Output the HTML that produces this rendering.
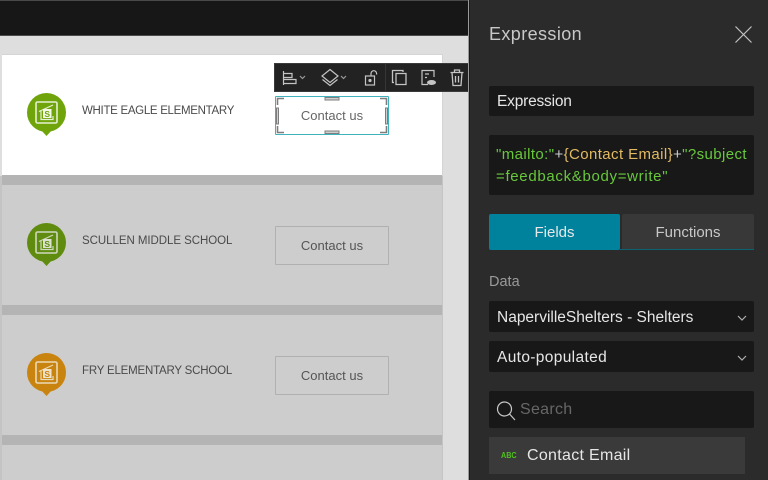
<!DOCTYPE html>
<html><head><meta charset="utf-8">
<style>
html,body{margin:0;padding:0;width:768px;height:480px;overflow:hidden;background:#dedede;font-family:"Liberation Sans",sans-serif}
.a{position:absolute;box-sizing:border-box}
.t{position:absolute;white-space:nowrap;letter-spacing:0}
.box{position:absolute;left:489px;width:265px;background:#181818;border-radius:2px}
.lbl{position:absolute;left:82px;font-size:11.5px;color:#4a4a4a;white-space:nowrap;line-height:14px;letter-spacing:-.3px}
.btn{position:absolute;left:275px;width:114px;height:39px;border:1px solid #b0b0b0;text-align:center;line-height:37px;font-size:13px;color:#555;box-sizing:border-box;border-radius:1px}
svg{position:absolute;overflow:visible}
.pf{color:#e6e6e6;font-size:15.5px;position:absolute;left:497px;white-space:nowrap}
</style></head><body>
<div class="a" style="left:0;top:0;width:768px;height:36px;background:#171717;border-top:1px solid #4a4a4a;"></div>
<div class="a" style="left:0;top:35px;width:469px;height:1px;background:#4a4a4a"></div>

<div class="a" style="left:2px;top:54px;width:441px;height:122px;background:#d4d4d4"></div>
<div class="a" style="left:0;top:176px;width:443px;height:304px;background:#c4c4c4"></div>
<div class="a" style="left:2px;top:55px;width:440px;height:120px;background:#fff"></div>
<div class="a" style="left:2px;top:175px;width:440px;height:10px;background:#b4b4b4"></div>
<div class="a" style="left:2px;top:185px;width:440px;height:120px;background:#cdcdcd"></div>
<div class="a" style="left:2px;top:305px;width:440px;height:10px;background:#b4b4b4"></div>
<div class="a" style="left:2px;top:315px;width:440px;height:120px;background:#cdcdcd"></div>
<div class="a" style="left:2px;top:435px;width:440px;height:10px;background:#b4b4b4"></div>
<div class="a" style="left:2px;top:445px;width:440px;height:35px;background:#cdcdcd"></div>

<svg style="left:27px;top:93px" width="40" height="44" viewBox="0 0 40 44">
<circle cx="19.5" cy="19.5" r="19.5" fill="#6fa50b"/><path d="M14 37L19.5 43L25 37Z" fill="#6fa50b"/>
<rect x="9" y="9" width="21" height="21" rx="1.5" fill="none" stroke="#e6f0d2" stroke-width="1.6"/>
<path d="M12 18.5L26 12M14 17V26.5H16M14 26.500H26V23" fill="none" stroke="#e6f0d2" stroke-width="1.2"/>
<rect x="16" y="16" width="8.500" height="9" fill="#f4f8ea"/><text x="20.200" y="24" font-size="8.500" font-weight="bold" text-anchor="middle" fill="#6fa50b" font-family="Liberation Sans">S</text>
</svg>
<svg style="left:27px;top:223px" width="40" height="44" viewBox="0 0 40 44">
<circle cx="19.5" cy="19.5" r="19.5" fill="#5f8c0f"/><path d="M14 37L19.5 43L25 37Z" fill="#5f8c0f"/>
<rect x="9" y="9" width="21" height="21" rx="1.5" fill="none" stroke="#cfd8bd" stroke-width="1.6"/>
<path d="M12 18.5L26 12M14 17V26.5H16M14 26.500H26V23" fill="none" stroke="#cfd8bd" stroke-width="1.2"/>
<rect x="16" y="16" width="8.500" height="9" fill="#dce2d0"/><text x="20.200" y="24" font-size="8.500" font-weight="bold" text-anchor="middle" fill="#5f8c0f" font-family="Liberation Sans">S</text>
</svg>
<svg style="left:27px;top:353px" width="40" height="44" viewBox="0 0 40 44">
<circle cx="19.5" cy="19.5" r="19.5" fill="#c8840f"/><path d="M14 37L19.5 43L25 37Z" fill="#c8840f"/>
<rect x="9" y="9" width="21" height="21" rx="1.5" fill="none" stroke="#ecd9b5" stroke-width="1.6"/>
<path d="M12 18.5L26 12M14 17V26.5H16M14 26.500H26V23" fill="none" stroke="#ecd9b5" stroke-width="1.2"/>
<rect x="16" y="16" width="8.500" height="9" fill="#efe3cc"/><text x="20.200" y="24" font-size="8.500" font-weight="bold" text-anchor="middle" fill="#c8840f" font-family="Liberation Sans">S</text>
</svg>

<div class="lbl" style="top:104px">WHITE EAGLE ELEMENTARY</div>
<div class="lbl" style="top:234px;letter-spacing:-.05px">SCULLEN MIDDLE SCHOOL</div>
<div class="lbl" style="top:364px;letter-spacing:-.2px">FRY ELEMENTARY SCHOOL</div>

<div class="btn" style="top:96px;border-color:#3fb3bd;color:#666">Contact us</div>
<div class="btn" style="top:226px">Contact us</div>
<div class="btn" style="top:356px">Contact us</div>

<svg style="left:275px;top:96px" width="114" height="39" viewBox="0 0 114 39" fill="none" stroke="#7d7d7d">
<path d="M2.500 9V2.500H9M105 2.500H111.500V9M2.500 30V36.500H9M105 36.500H111.500V30" stroke-width="1.600"/>
<rect x="50" y="1.500" width="14" height="2.500" fill="#cfcfcf" stroke-width="1"/>
<rect x="50" y="35" width="14" height="2.500" fill="#cfcfcf" stroke-width="1"/>
<rect x="1.500" y="12" width="2" height="16" fill="#cfcfcf" stroke-width="1"/>
<rect x="110.500" y="12" width="2" height="16" fill="#cfcfcf" stroke-width="1"/>
</svg>

<div class="a" style="left:274px;top:63px;width:195px;height:29px;background:#222;border:1px solid #3a3a3a"></div>
<div class="a" style="left:385px;top:64px;width:1px;height:27px;background:#363636"></div>
<svg style="left:274px;top:63px" width="195" height="29" viewBox="0 0 195 29" fill="none" stroke="#c4c4c4" stroke-width="1.2">
<path d="M9.5 8V22M9.5 10.5H18V14.5H9.5M9.5 16.5H22V20.5H9.5"/>
<path d="M26 13L28.5 15.5L31 13" stroke="#999"/>
<path d="M56 6.5L64 13L56 19.5L48 13ZM48.500 16.500L56 22.500L63.500 16.500"/>
<path d="M67 13L69.500 15.500L72 13" stroke="#999"/>
<rect x="91.500" y="13" width="9" height="9"/><circle cx="96" cy="17.500" r="1" fill="#c4c4c4"/><path d="M97 13V10.500A2.800 2.800 0 0 1 102.600 10.500V11.500"/>
<path d="M120 19.500H118.500V7.500H129V9M122 10.500H132V21.500H122Z" stroke-width="1.300"/>
<path d="M154 21.500H148V7.500H160V14M151 11H155M151 14.500H153" stroke-width="1.200"/><ellipse cx="157.500" cy="19.500" rx="4.500" ry="2.500" fill="#c4c4c4" stroke="none"/>
<path d="M176.500 9.500H189.500M178 9.500L179 22.500H187L188 9.500M180.500 9.500V7H185.500V9.500M181.500 13V19.500M184.500 13V19.500" stroke-width="1.300"/>
</svg>

<div class="a" style="left:469px;top:0;width:299px;height:480px;background:#2b2b2b;border-left:1px solid #1b1b1b;box-shadow:-1px 0 0 #9a9a9a"></div>
<div class="t" style="left:489px;top:23px;font-size:18px;color:#c8c8c8;line-height:22px;letter-spacing:.4px">Expression</div>
<svg style="left:735px;top:26px" width="17" height="17" viewBox="0 0 17 17"><path d="M0.500 0.500L16.500 16.500M16.500 0.500L0.500 16.500" stroke="#c4c4c4" stroke-width="1.200" fill="none"/></svg>

<div class="box" style="top:86px;height:30px"></div>
<div class="pf" style="top:93px;line-height:18px;letter-spacing:-.2px">Expression</div>

<div class="box" style="top:135px;height:60px"></div>
<div class="t" style="left:496px;top:144px;font-size:15px;line-height:22px;color:#68c83c;letter-spacing:.4px">"mailto:"<span style="color:#ccc">+</span><span style="color:#e2bb62">{Contact Email}</span><span style="color:#ccc">+</span>"?subject<br><span style="letter-spacing:.68px">=feedback&amp;body=write"</span></div>

<div class="a" style="left:489px;top:214px;width:131px;height:36px;background:#00819c;border-radius:2px"></div>
<div class="a" style="left:622px;top:214px;width:132px;height:35px;background:#383838;border-radius:2px 2px 0 0"></div>
<div class="a" style="left:620px;top:249px;width:134px;height:1px;background:#0d6376"></div>
<div class="t" style="left:489px;top:224px;width:131px;text-align:center;font-size:15px;line-height:18px;color:#e8e8e8">Fields</div>
<div class="t" style="left:622px;top:224px;width:132px;text-align:center;font-size:15px;line-height:18px;color:#c8c8c8">Functions</div>

<div class="t" style="left:489px;top:273px;font-size:14.500px;line-height:18px;color:#9a9a9a">Data</div>

<div class="box" style="top:301px;height:31px"></div>
<div class="pf" style="top:309px;line-height:18px">NapervilleShelters - Shelters</div>
<svg style="left:737px;top:315px" width="10" height="6" viewBox="0 0 10 6"><path d="M1 1L5 5L9 1" stroke="#b0b0b0" stroke-width="1.200" fill="none"/></svg>

<div class="box" style="top:341px;height:31px"></div>
<div class="pf" style="top:349px;line-height:18px;letter-spacing:.35px">Auto-populated</div>
<svg style="left:737px;top:355px" width="10" height="6" viewBox="0 0 10 6"><path d="M1 1L5 5L9 1" stroke="#b0b0b0" stroke-width="1.200" fill="none"/></svg>

<div class="box" style="top:391px;height:37px"></div>
<svg style="left:496px;top:401px" width="20" height="20" viewBox="0 0 20 20"><circle cx="8.500" cy="8" r="7" stroke="#c8c8c8" stroke-width="1.200" fill="none"/><path d="M13.500 13L19 19" stroke="#c8c8c8" stroke-width="1.200"/></svg>
<div class="t" style="left:520px;top:400px;font-size:16px;line-height:19px;color:#676767;letter-spacing:.3px">Search</div>

<div class="a" style="left:489px;top:437px;width:256px;height:37px;background:#3a3a3a"></div>
<div class="t" style="left:501px;top:450px;font-size:8.500px;line-height:10px;font-weight:bold;color:#4fc21b;transform:scaleX(.85);transform-origin:left">ABC</div>
<div class="t" style="left:527px;top:446px;font-size:16px;line-height:20px;color:#e6e6e6;letter-spacing:.3px">Contact Email</div>
</body></html>
